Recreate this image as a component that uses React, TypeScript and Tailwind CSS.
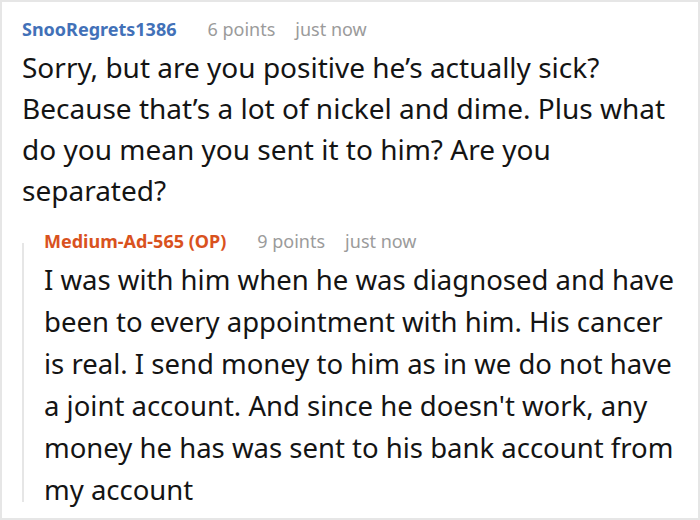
export default function App() {
  return (
    <div
      className="w-[700px] h-[520px] bg-white border-2 border-[#e6e6e6] overflow-hidden pl-[20px] pr-[14px] pt-[15px]"
      style={{ fontFamily: '"Noto Sans", "Open Sans", sans-serif' }}
    >
      {/* parent comment */}
      <div className="flex items-baseline text-[18px] leading-[24px]">
        <span className="font-bold text-[#4271b8]">SnooRegrets1386</span>
        <span className="ml-[31px] text-[#9b9b9b]">6 points</span>
        <span className="ml-[20px] text-[#9b9b9b]">just now</span>
      </div>
      <p className="mt-[6px] text-[28px] leading-[41px] text-[#141414]">
        Sorry, but are you positive he’s actually sick? Because that’s a lot of nickel and dime. Plus what
        do you mean you sent it to him? Are you separated?
      </p>

      {/* reply */}
      <div className="mt-[18px] flex">
        <div className="w-[2px] shrink-0 mt-[14px] mb-[9px] bg-[#e6e6e6]" />
        <div className="pl-[20px] min-w-0 flex-1">
          <div className="flex items-baseline text-[18px] leading-[24px]">
            <span className="font-bold text-[#d9521e]">Medium-Ad-565 (OP)</span>
            <span className="ml-[31px] text-[#9b9b9b]">9 points</span>
            <span className="ml-[20px] text-[#9b9b9b]">just now</span>
          </div>
          <p className="mt-[6px] text-[27.5px] leading-[42px] text-[#141414]">
            I was with him when he was diagnosed and have been to every appointment with him. His cancer
            is real. I send money to him as in we do not have a joint account. And since he doesn't work,
            any money he has was sent to his bank account from my account
          </p>
        </div>
      </div>
    </div>
  );
}
